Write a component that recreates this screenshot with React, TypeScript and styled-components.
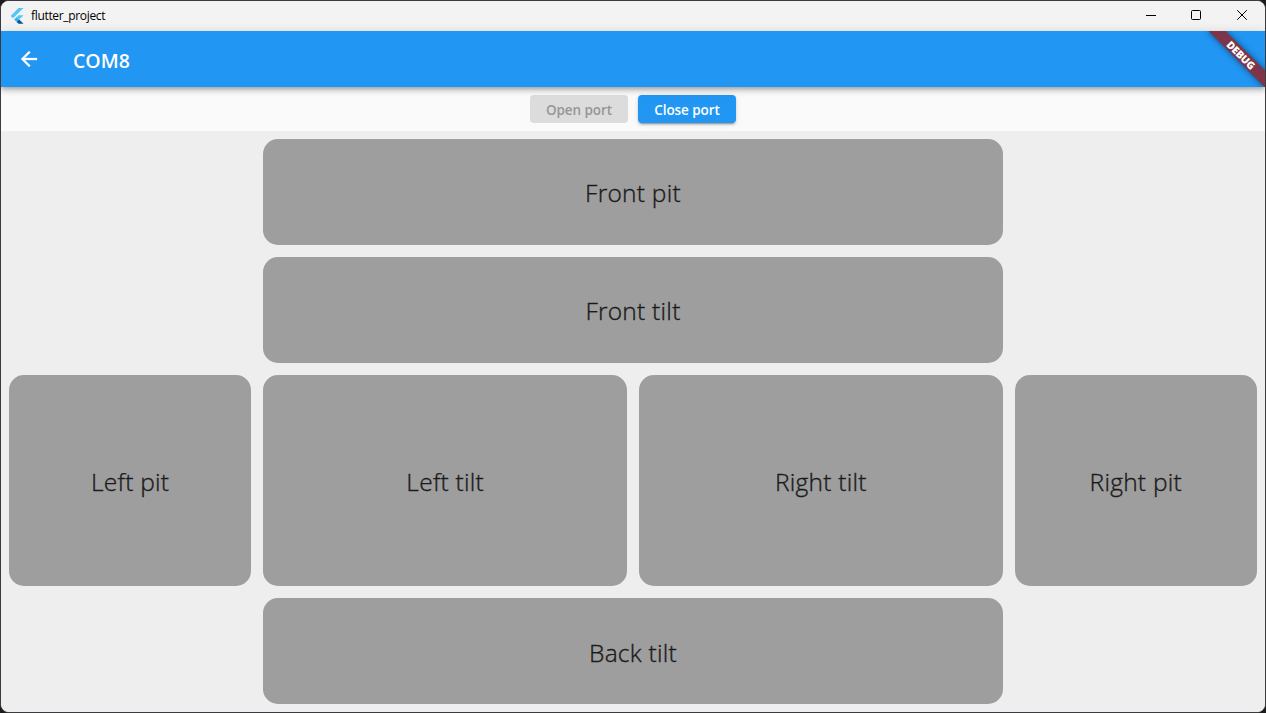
import React from "react";
import styled, { createGlobalStyle } from "styled-components";

const GlobalStyle = createGlobalStyle`
  * { box-sizing: border-box; }
  html, body { margin: 0; height: 100%; overflow: hidden; background: #1c1c1c; }
  body { font-family: "Open Sans", "Noto Sans", sans-serif; }
`;

const Window = styled.div`
  display: flex;
  flex-direction: column;
  width: 100vw;
  height: 100vh;
  border: 1px solid #3b3b3d;
  border-radius: 9px;
  overflow: hidden;
  background: #eeeeee;
`;

const TitleBar = styled.header`
  display: flex;
  align-items: center;
  flex: 0 0 30px;
  padding-left: 8px;
  background: #f3f3f3;
`;

const Logo = styled.svg`
  width: 16px;
  height: 16px;
  margin-right: 6px;
`;

const WindowTitle = styled.span`
  flex: 1;
  font-size: 12px;
  line-height: 16px;
  letter-spacing: -0.33px;
  color: #000;
`;

const Caption = styled.button<{ $width?: number }>`
  display: flex;
  align-items: center;
  justify-content: center;
  width: ${(p) => p.$width ?? 46}px;
  height: 30px;
  padding: 0 0 2px;
  border: 0;
  background: transparent;
`;

const AppBar = styled.div`
  position: relative;
  z-index: 1;
  display: flex;
  align-items: center;
  flex: 0 0 56px;
  padding-left: 16px;
  background: #2196f3;
  box-shadow: 0 2px 4px -1px rgba(0, 0, 0, 0.2), 0 4px 5px rgba(0, 0, 0, 0.14),
    0 1px 10px rgba(0, 0, 0, 0.12);
`;

const BackIcon = styled.svg`
  width: 24px;
  height: 24px;
  fill: #fff;
  stroke: #fff;
  stroke-width: 0.3;
`;

const Heading = styled.h1`
  margin: 3px 0 0 32px;
  font-size: 19.5px;
  line-height: 26px;
  font-weight: 600;
  letter-spacing: 0;
  color: #fff;
`;

const BannerClip = styled.div`
  position: absolute;
  top: 0;
  right: 0;
  width: 80px;
  height: 56px;
  overflow: hidden;
`;

const Banner = styled.div`
  position: absolute;
  top: 28px;
  left: 40px;
  width: 80px;
  height: 12px;
  transform: rotate(45deg);
  transform-origin: 40px -28px;
  background: #7d354a;
  box-shadow: 0 0 6px rgba(0, 0, 0, 0.5);
  text-align: center;
  color: #fff;
  font-size: 10.4px;
  line-height: 12px;
  font-weight: 800;
  letter-spacing: -0.2px;
`;

const Actions = styled.div`
  display: flex;
  justify-content: center;
  gap: 10px;
  flex: 0 0 44px;
  padding: 8px 0;
  background: #fafafa;
`;

const PortButton = styled.button`
  width: 98px;
  height: 28px;
  padding: 1px 0 0;
  border: 0;
  border-radius: 4px;
  font: 600 13.5px "Open Sans", sans-serif;
  letter-spacing: -0.08px;
  color: #fff;
  background: #2196f3;
  box-shadow: 0 3px 1px -2px rgba(0, 0, 0, 0.2), 0 2px 2px rgba(0, 0, 0, 0.14),
    0 1px 5px rgba(0, 0, 0, 0.12);

  &:disabled {
    color: #969696;
    background: #dcdcdc;
    box-shadow: none;
  }
`;

const Board = styled.main`
  flex: 1;
  display: grid;
  grid-template-columns: 2fr 3fr 3fr 2fr;
  grid-template-rows: 1fr 1fr 2fr 1fr;
  gap: 12px;
  padding: 8px;
  background: #eeeeee;
`;

const Tile = styled.div<{ $column: string }>`
  grid-column: ${(p) => p.$column};
  display: flex;
  align-items: center;
  justify-content: center;
  padding-top: 3px;
  min-height: 0;
  border-radius: 15px;
  background: #9e9e9e;
  color: #1a1a1a;
  font-size: 24.5px;
  line-height: 34px;
  font-weight: 300;
  letter-spacing: 0.25px;
  -webkit-text-stroke: 0.35px #1a1a1a;
`;

export default function App() {
  return (
    <>
      <GlobalStyle />
      <Window>
        <TitleBar>
          <Logo viewBox="0 0 16 16">
            <path fill="#54c5f8" d="M9.5 0H14.5L4 10.3 1.6 7.9Z" />
            <path fill="#54c5f8" d="M9.5 7.3H14.5L10.2 11.5 7.8 9.1Z" />
            <path fill="#29b6f6" d="M5.2 11.5 7.7 9.1 10.2 11.5 7.7 13.9Z" />
            <path fill="#01579b" d="M7.7 13.9 10.2 11.5 14.5 15.8H9.5Z" />
          </Logo>
          <WindowTitle>flutter_project</WindowTitle>
          <Caption aria-label="Minimize" $width={44}>
            <svg width="10" height="10"><path d="M0 5.5H10" stroke="#000" /></svg>
          </Caption>
          <Caption aria-label="Maximize">
            <svg width="10" height="10"><rect x=".5" y=".5" width="9" height="9" rx="1" fill="none" stroke="#000" /></svg>
          </Caption>
          <Caption aria-label="Close">
            <svg width="10" height="10"><path d="M.2.2 9.8 9.8M9.8.2.2 9.8" stroke="#000" /></svg>
          </Caption>
        </TitleBar>
        <AppBar>
          <BackIcon viewBox="0 0 24 24">
            <path d="M20 11H7.83l5.59-5.59L12 4l-8 8 8 8 1.41-1.41L7.83 13H20v-2z" />
          </BackIcon>
          <Heading>COM8</Heading>
          <BannerClip>
            <Banner>DEBUG</Banner>
          </BannerClip>
        </AppBar>
        <Actions>
          <PortButton disabled>Open port</PortButton>
          <PortButton>Close port</PortButton>
        </Actions>
        <Board>
          <Tile $column="2 / 4">Front pit</Tile>
          <Tile $column="2 / 4">Front tilt</Tile>
          <Tile $column="1">Left pit</Tile>
          <Tile $column="2">Left tilt</Tile>
          <Tile $column="3">Right tilt</Tile>
          <Tile $column="4">Right pit</Tile>
          <Tile $column="2 / 4">Back tilt</Tile>
        </Board>
      </Window>
    </>
  );
}
